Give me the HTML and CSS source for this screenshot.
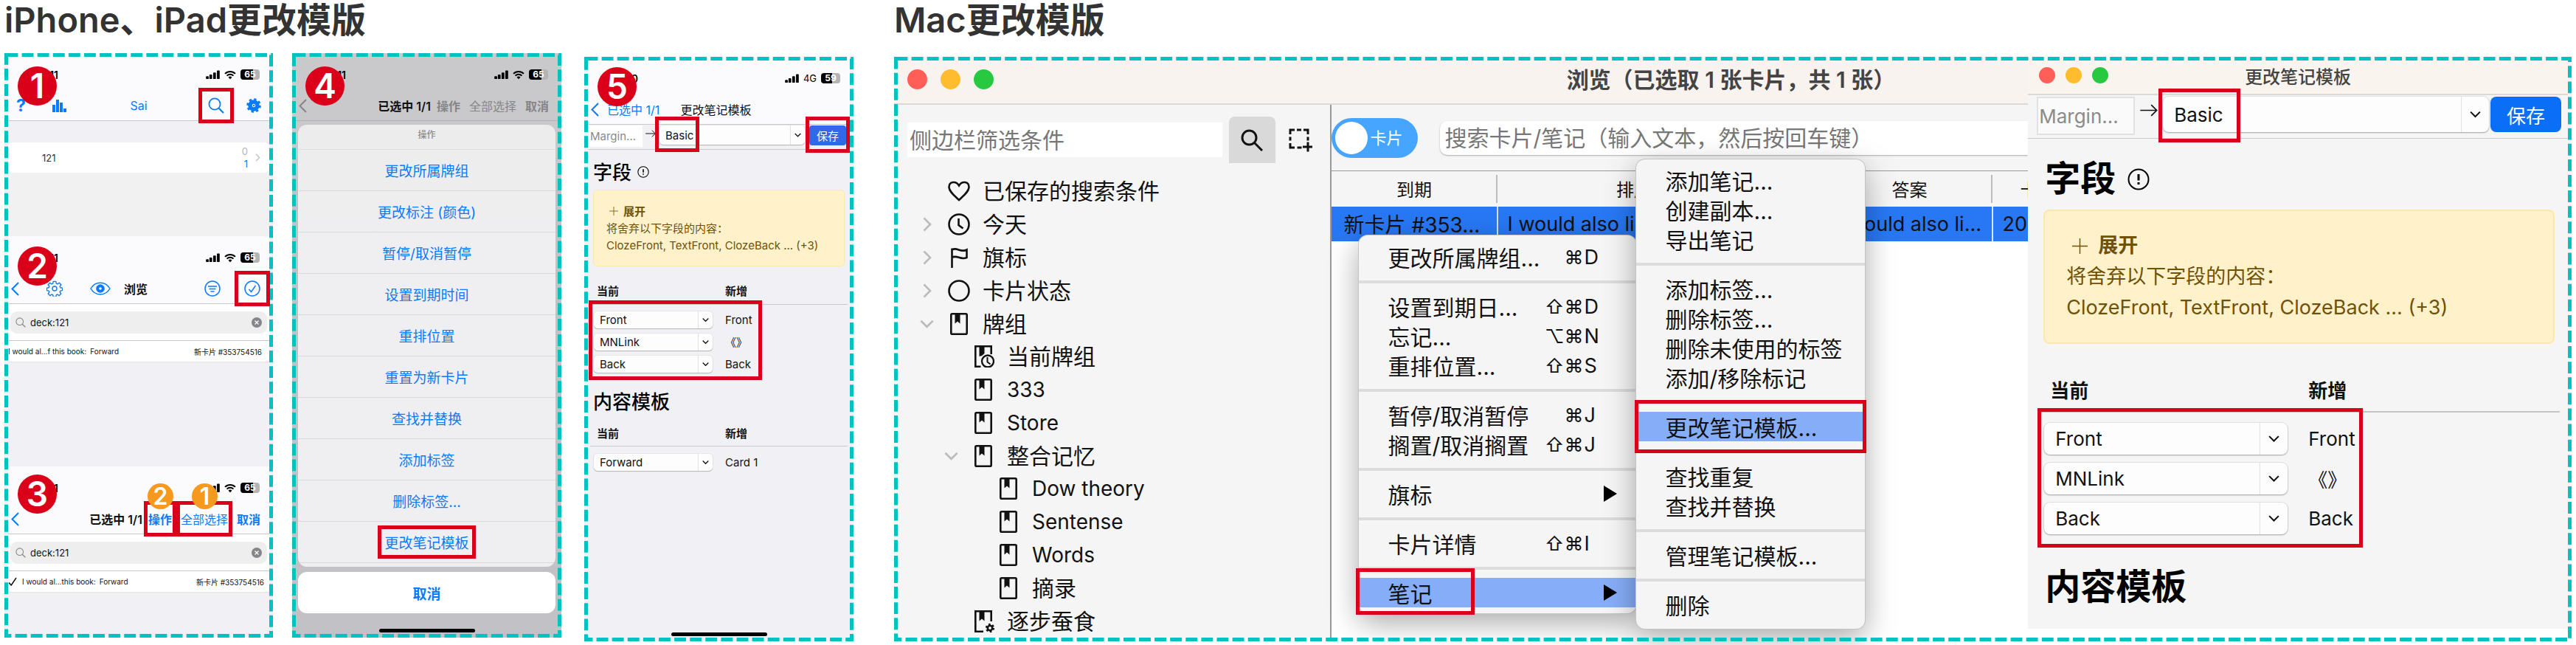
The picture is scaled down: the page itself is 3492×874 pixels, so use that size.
FILE: index.html
```html
<!DOCTYPE html>
<html lang="zh-CN">
<head>
<meta charset="utf-8">
<title>更改模版</title>
<link rel="stylesheet" href="styles.css">
</head>
<body>
<svg class="sprite" aria-hidden="true">
  <symbol id="signal" viewBox="0 0 20 14"><g fill="currentColor"><rect x="0" y="9" width="4" height="4" rx="1"/><rect x="5" y="6.5" width="4" height="6.500" rx="1"/><rect x="10.500" y="3.500" width="4" height="9.500" rx="1"/><rect x="16" y="0.500" width="4" height="12.500" rx="1"/></g></symbol>
  <symbol id="wifi" viewBox="0 0 18 14"><g fill="none" stroke="currentColor" stroke-width="2.300"><path d="M1.200 5.200a11 11 0 0 1 15.600 0"/><path d="M4 8.300a7 7 0 0 1 10 0"/></g><path d="M9 13.500 6.200 10.600a4 4 0 0 1 5.600 0z" fill="currentColor"/></symbol>
  <symbol id="chart" viewBox="0 0 19 17"><path fill="currentColor" d="M0 7h4v10H0zM5 0h4v17H5zM10 4h4v13h-4zM15 12h4v5h-4z"/></symbol>
  <symbol id="search" viewBox="0 0 22 22"><g fill="none" stroke="currentColor"><circle cx="9" cy="9" r="7.600" stroke-width="1.700"/><path d="m14.500 14.500 6.500 6.500" stroke-width="2.200"/></g></symbol>
  <symbol id="gear" viewBox="0 0 20 20"><g fill="none" stroke="currentColor"><circle cx="10" cy="10" r="5" stroke-width="5.500"/><circle cx="10" cy="10" r="8.300" stroke-width="3" stroke-dasharray="3.260 3.260"/></g><circle cx="10" cy="10" r="1.200" fill="currentColor"/></symbol>
  <symbol id="gear-line" viewBox="0 0 24 24"><g fill="none" stroke="currentColor" stroke-width="1.500" stroke-linejoin="round"><circle cx="12" cy="12" r="3.300"/><path d="M10 1.500h4l.5 3 1.800.8 2.500-1.800 2.800 2.800-1.800 2.500.7 1.800 3 .5v3.800l-3 .5-.7 1.800 1.800 2.500-2.800 2.800-2.500-1.800-1.800.8-.5 3h-4l-.5-3-1.800-.8-2.500 1.800-2.800-2.800 1.800-2.500-.7-1.800-3-.5v-3.800l3-.5.7-1.800-1.800-2.500 2.800-2.800 2.500 1.800 1.800-.8z"/></g></symbol>
  <symbol id="eye" viewBox="0 0 28 18"><path d="M1 9c6-10.500 20-10.500 26 0-6 10.500-20 10.500-26 0z" fill="none" stroke="currentColor" stroke-width="1.500"/><circle cx="14" cy="9" r="3.800" fill="none" stroke="currentColor" stroke-width="4"/></symbol>
  <symbol id="filter" viewBox="0 0 22 22"><g fill="none" stroke="currentColor" stroke-width="1.500"><circle cx="11" cy="11" r="10"/><path d="M5 8h12M6.500 11.500h9M8.500 15h5"/></g></symbol>
  <symbol id="check-circle" viewBox="0 0 22 22"><g fill="none" stroke="currentColor" stroke-width="1.500"><circle cx="11" cy="11" r="10"/><path d="m6.500 12 3 3.500L15.500 7"/></g></symbol>
  <symbol id="back" viewBox="0 0 11 19"><path d="M10 1 1.500 9.500 10 18" fill="none" stroke="currentColor" stroke-width="2"/></symbol>
  <symbol id="clear" viewBox="0 0 14 14"><circle cx="7" cy="7" r="7" fill="#85858a"/><path d="m4.500 4.500 5 5m0-5-5 5" stroke="#fff" stroke-width="1.300"/></symbol>
  <symbol id="tick" viewBox="0 0 12 12"><path d="m1 7.500 3.200 3.500L11 1" fill="none" stroke="currentColor" stroke-width="1.500"/></symbol>
  <symbol id="right" viewBox="0 0 12 20"><path d="m1.500 1.500 8.500 8.500-8.500 8.500" fill="none" stroke="currentColor" stroke-width="2.600"/></symbol>
  <symbol id="down" viewBox="0 0 20 12"><path d="m1.500 1.500 8.500 8.500 8.500-8.500" fill="none" stroke="currentColor" stroke-width="2.800"/></symbol>
  <symbol id="to" viewBox="0 0 22 16"><path d="M0 8h20M14 1l7 7-7 7" fill="none" stroke="currentColor" stroke-width="1.600"/></symbol>
  <symbol id="info" viewBox="0 0 30 30"><circle cx="15" cy="15" r="13.500" fill="none" stroke="currentColor" stroke-width="2"/><path d="M15 8v8.500M15 19v3" stroke="currentColor" stroke-width="3"/></symbol>
  <symbol id="plus" viewBox="0 0 22 22"><path d="M11 0v22M0 11h22" stroke="currentColor" stroke-width="1.500"/></symbol>
  <symbol id="find" viewBox="0 0 30 30"><g fill="none" stroke="currentColor" stroke-width="3"><circle cx="11.500" cy="11.500" r="9.500"/><path d="m18.500 18.500 10.500 10.500"/></g></symbol>
  <symbol id="select-add" viewBox="0 0 32 32"><path d="M2 8V2h6M11 2h6M20 2h6v6M2 11.500v5M26 11.500v5M2 20v6h6M11.500 26h6" fill="none" stroke="currentColor" stroke-width="3"/><path d="M26 18.500v13M19 25h13" stroke="currentColor" stroke-width="3"/></symbol>
  <symbol id="heart" viewBox="0 0 30 30"><path d="M15 27C10 22 1.500 16 1.500 9.500 1.500 2 11 .5 15 7.500 19 .5 28.500 2 28.500 9.500 28.500 16 20 22 15 27z" fill="none" stroke="currentColor" stroke-width="2.600"/></symbol>
  <symbol id="clock" viewBox="0 0 30 30"><g fill="none" stroke="currentColor" stroke-width="2.600"><circle cx="15" cy="15" r="13.500"/><path d="M14.500 7v9l6 4.500"/></g></symbol>
  <symbol id="flag" viewBox="0 0 30 30"><path d="M5.500 29V2.500M5.500 4.500C12 0 17 9 25.500 4.500v10.500C17 19 12 10.500 5.500 15" fill="none" stroke="currentColor" stroke-width="2.600"/></symbol>
  <symbol id="ring" viewBox="0 0 30 30"><circle cx="15" cy="15" r="13.500" fill="none" stroke="currentColor" stroke-width="2.600"/></symbol>
  <symbol id="deck" viewBox="0 0 30 30"><rect x="4.300" y="1.300" width="21.400" height="27.400" rx="1.500" fill="none" stroke="currentColor" stroke-width="2.600"/><path d="M9.500 2h7v12.500L13 11.500l-3.500 3z" fill="currentColor"/></symbol>
  <symbol id="deck-now" viewBox="0 0 30 30"><path d="M11.500 28.700H4.300V1.300h21.400V12" fill="none" stroke="currentColor" stroke-width="2.600"/><path d="M9.500 2h7v9L13 14l-3.500 1z" fill="currentColor"/><circle cx="21" cy="21.500" r="8" fill="none" stroke="currentColor" stroke-width="2.300"/><path d="M20.500 16v6.500l4 3" fill="none" stroke="currentColor" stroke-width="2"/></symbol>
  <symbol id="deck-gear" viewBox="0 0 30 30"><path d="M15 28.700H4.300V1.300h21.400V15" fill="none" stroke="currentColor" stroke-width="2.600"/><path d="M9.500 2h7v12.500L13 11.500l-3.500 3z" fill="currentColor"/><circle cx="24" cy="24" r="3.200" fill="none" stroke="currentColor" stroke-width="2.600"/><circle cx="24" cy="24" r="5" fill="none" stroke="currentColor" stroke-width="2.300" stroke-dasharray="2.618 2.618"/></symbol>
</svg>

<main class="page">
  <section class="group">
    <h1>iPhone、iPad更改模版</h1>
    <div class="phones">

      <article class="panel phone steps">
        <section class="screen screen-decks">
          <span class="badge badge-low">1</span>
          <header class="top">
            <div class="status"><time>11</time><span class="indicators"><svg class="i-signal"><use href="#signal"/></svg><svg class="i-wifi"><use href="#wifi"/></svg><span class="battery">65</span></span></div>
            <nav class="nav">
              <div class="side nav-wide"><button class="help" aria-label="帮助">?</button><button aria-label="统计"><svg class="i-chart"><use href="#chart"/></svg></button></div>
              <span class="user">Sai</span>
              <div class="side end end-near"><button class="marked mark-icon" aria-label="搜索"><svg class="i-22"><use href="#search"/></svg></button><button aria-label="设置"><svg class="i-20"><use href="#gear"/></svg></button></div>
            </nav>
          </header>
          <div class="deck-row"><span>121</span><span class="counts"><span>0</span><b>1</b></span><svg class="i-more"><use href="#right"/></svg></div>
        </section>

        <section class="screen screen-browse">
          <span class="badge">2</span>
          <header class="top">
            <div class="status"><time>11</time><span class="indicators"><svg class="i-signal"><use href="#signal"/></svg><svg class="i-wifi"><use href="#wifi"/></svg><span class="battery">65</span></span></div>
            <nav class="nav">
              <div class="side nav-tools"><button aria-label="返回"><svg class="i-back"><use href="#back"/></svg></button><button aria-label="设置"><svg class="i-22"><use href="#gear-line"/></svg></button><button aria-label="预览"><svg class="i-eye"><use href="#eye"/></svg></button></div>
              <strong>浏览</strong>
              <div class="side end"><button aria-label="筛选"><svg class="i-22"><use href="#filter"/></svg></button><button class="marked mark-icon" aria-label="选择"><svg class="i-22"><use href="#check-circle"/></svg></button></div>
            </nav>
          </header>
          <div class="search-wrap"><label class="search"><svg class="i-14"><use href="#search"/></svg><input type="text" value="deck:121" aria-label="搜索"><svg class="i-14 i-clear"><use href="#clear"/></svg></label></div>
          <div class="card-row"><span>I would al...f this book:</span><span>Forward</span><span class="due">新卡片 #353754516</span></div>
        </section>

        <section class="screen screen-select">
          <span class="badge badge-high">3</span>
          <header class="top">
            <div class="status"><time>11</time><span class="indicators"><svg class="i-signal"><use href="#signal"/></svg><svg class="i-wifi"><use href="#wifi"/></svg><span class="battery">65</span></span></div>
            <nav class="nav nav-select">
              <button class="first" aria-label="返回"><svg class="i-back"><use href="#back"/></svg></button>
              <strong>已选中 1/1</strong>
              <button class="strong marked mark-text">操作<span class="dot">2</span></button>
              <button class="marked mark-text">全部选择<span class="dot">1</span></button>
              <button class="strong">取消</button>
            </nav>
          </header>
          <div class="search-wrap"><label class="search"><svg class="i-14"><use href="#search"/></svg><input type="text" value="deck:121" aria-label="搜索"><svg class="i-14 i-clear"><use href="#clear"/></svg></label></div>
          <div class="card-row picked"><svg class="i-12"><use href="#tick"/></svg><span>I would al...this book:</span><span>Forward</span><span class="due">新卡片 #353754516</span></div>
        </section>
        <svg class="dashes" aria-hidden="true"><rect/></svg>
      </article>

      <article class="panel phone actions">
        <span class="badge badge-low">4</span>
        <header class="top">
          <div class="status"><time>11</time><span class="indicators"><svg class="i-signal"><use href="#signal"/></svg><svg class="i-wifi"><use href="#wifi"/></svg><span class="battery">65</span></span></div>
          <nav class="nav nav-select">
            <button class="first" aria-label="返回"><svg class="i-back"><use href="#back"/></svg></button>
            <strong>已选中 1/1</strong>
            <button class="strong">操作</button>
            <button>全部选择</button>
            <button class="strong">取消</button>
          </nav>
        </header>
        <div class="sheet">
          <h2>操作</h2>
          <button>更改所属牌组</button>
          <button>更改标注 (颜色)</button>
          <button>暂停/取消暂停</button>
          <button>设置到期时间</button>
          <button>重排位置</button>
          <button>重置为新卡片</button>
          <button>查找并替换</button>
          <button>添加标签</button>
          <button>删除标签...</button>
          <button><span class="marked mark-sheet">更改笔记模板</span></button>
        </div>
        <button class="cancel">取消</button>
        <div class="home"></div>
        <svg class="dashes" aria-hidden="true"><rect/></svg>
      </article>

      <article class="panel phone change low">
        <span class="badge">5</span>
        <header class="top">
          <div class="status"><time>0</time><span class="indicators"><svg class="i-signal"><use href="#signal"/></svg><span class="net">4G</span><span class="battery half">59</span></span></div>
          <nav class="nav">
            <div class="side nav-back"><button class="back-text"><svg class="i-back"><use href="#back"/></svg>已选中 1/1</button></div>
            <span>更改笔记模板</span>
            <div class="side end"></div>
          </nav>
        </header>
        <div class="template small">
          <div class="toolbar">
            <input class="old" type="text" value="Margin..." disabled aria-label="当前模板">
            <svg class="arrow"><use href="#to"/></svg>
            <div class="pick kind"><select aria-label="新模板"><option>Basic</option></select><svg><use href="#down"/></svg><span class="frame"></span></div>
            <button class="save marked mark-save">保存</button>
          </div>
          <div class="content">
            <h2>字段 <svg class="info"><use href="#info"/></svg></h2>
            <div class="alert"><b><svg><use href="#plus"/></svg>展开</b><span>将舍弃以下字段的内容：</span><span>ClozeFront, TextFront, ClozeBack ... (+3)</span></div>
            <table class="map boxed">
              <thead><tr><th>当前</th><th>新增</th></tr></thead>
              <tbody>
                <tr><td><div class="pick"><select aria-label="Front"><option>Front</option></select><svg><use href="#down"/></svg></div></td><td>Front</td></tr>
                <tr><td><div class="pick"><select aria-label="《》"><option>MNLink</option></select><svg><use href="#down"/></svg></div></td><td>《》</td></tr>
                <tr><td><div class="pick"><select aria-label="Back"><option>Back</option></select><svg><use href="#down"/></svg></div></td><td>Back</td></tr>
              </tbody>
            </table>
            <h2 class="second">内容模板</h2>
            <table class="map">
              <thead><tr><th>当前</th><th>新增</th></tr></thead>
              <tbody><tr><td><div class="pick"><select aria-label="Card 1"><option>Forward</option></select><svg><use href="#down"/></svg></div></td><td>Card 1</td></tr></tbody>
            </table>
          </div>
        </div>
        <div class="home"></div>
        <svg class="dashes" aria-hidden="true"><rect/></svg>
      </article>
    </div>
  </section>

  <section class="group">
    <h1>Mac更改模版</h1>
    <article class="panel mac low">
      <div class="window browser">
        <header class="titlebar"><span class="lights"><i></i><i></i><i></i></span><h2>浏览（已选取 1 张卡片，共 1 张）</h2></header>
        <div class="split">
          <aside class="sidebar">
            <div class="sidebar-top"><input type="text" placeholder="侧边栏筛选条件" aria-label="侧边栏筛选条件"><button class="find" aria-label="搜索"><svg class="i-30"><use href="#find"/></svg></button><button aria-label="选择"><svg class="i-32"><use href="#select-add"/></svg></button></div>
            <ul class="tree">
              <li><i></i><svg><use href="#heart"/></svg>已保存的搜索条件</li>
              <li><i><svg class="fold"><use href="#right"/></svg></i><svg><use href="#clock"/></svg>今天</li>
              <li><i><svg class="fold"><use href="#right"/></svg></i><svg><use href="#flag"/></svg>旗标</li>
              <li><i><svg class="fold"><use href="#right"/></svg></i><svg><use href="#ring"/></svg>卡片状态</li>
              <li><i><svg class="fold open"><use href="#down"/></svg></i><svg><use href="#deck"/></svg>牌组</li>
              <li class="l2"><i></i><svg><use href="#deck-now"/></svg>当前牌组</li>
              <li class="l2 latin"><i></i><svg><use href="#deck"/></svg>333</li>
              <li class="l2 latin"><i></i><svg><use href="#deck"/></svg>Store</li>
              <li class="l2"><i><svg class="fold open"><use href="#down"/></svg></i><svg><use href="#deck"/></svg>整合记忆</li>
              <li class="l3 latin"><i></i><svg><use href="#deck"/></svg>Dow theory</li>
              <li class="l3 latin"><i></i><svg><use href="#deck"/></svg>Sentense</li>
              <li class="l3 latin"><i></i><svg><use href="#deck"/></svg>Words</li>
              <li class="l3"><i></i><svg><use href="#deck"/></svg>摘录</li>
              <li class="l2"><i></i><svg><use href="#deck-gear"/></svg>逐步蚕食</li>
            </ul>
          </aside>
          <div class="cards">
            <div class="cards-top">
              <label class="toggle"><input type="checkbox"><span>卡片</span></label>
              <input class="query" type="text" placeholder="搜索卡片/笔记（输入文本，然后按回车键）" aria-label="搜索卡片/笔记">
            </div>
            <table class="list">
              <colgroup><col class="c1"><col class="c2"><col class="c3"><col></colgroup>
              <thead><tr><th>到期</th><th class="sort">排序字段</th><th>答案</th><th class="cut">卡</th></tr></thead>
              <tbody><tr><td>新卡片 #353...</td><td>I would also like</td><td>I would also li…</td><td>20</td></tr></tbody>
            </table>

            <div class="menu menu-card">
              <button>更改所属牌组...<span class="mod">⌘</span><span class="key">D</span></button>
              <hr>
              <button>设置到期日...<span class="mod">⇧⌘</span><span class="key">D</span></button>
              <button>忘记...<span class="mod">⌥⌘</span><span class="key">N</span></button>
              <button>重排位置...<span class="mod">⇧⌘</span><span class="key">S</span></button>
              <hr>
              <button>暂停/取消暂停<span class="mod">⌘</span><span class="key">J</span></button>
              <button>搁置/取消搁置<span class="mod">⇧⌘</span><span class="key">J</span></button>
              <hr>
              <button>旗标<span class="sub"></span></button>
              <hr>
              <button>卡片详情<span class="mod">⇧⌘</span><span class="key">I</span></button>
              <hr>
              <button class="active">笔记<span class="sub"></span><span class="frame"></span></button>
            </div>
            <div class="menu menu-note">
              <button>添加笔记...</button>
              <button>创建副本...</button>
              <button>导出笔记</button>
              <hr>
              <button>添加标签...</button>
              <button>删除标签...</button>
              <button>删除未使用的标签</button>
              <button>添加/移除标记</button>
              <hr>
              <button class="active">更改笔记模板...<span class="frame"></span></button>
              <hr>
              <button>查找重复</button>
              <button>查找并替换</button>
              <hr>
              <button>管理笔记模板...</button>
              <hr>
              <button>删除</button>
            </div>
          </div>
        </div>
      </div>

      <div class="window dialog">
        <header class="titlebar"><span class="lights"><i></i><i></i><i></i></span><h2>更改笔记模板</h2></header>
        <div class="template large">
          <div class="toolbar">
            <input class="old" type="text" value="Margin..." disabled aria-label="当前模板">
            <svg class="arrow"><use href="#to"/></svg>
            <div class="pick kind"><select aria-label="新模板"><option>Basic</option></select><svg><use href="#down"/></svg><span class="frame"></span></div>
            <button class="save">保存</button>
          </div>
          <div class="content">
            <h2>字段 <svg class="info"><use href="#info"/></svg></h2>
            <div class="alert"><b><svg><use href="#plus"/></svg>展开</b><span>将舍弃以下字段的内容：</span><span>ClozeFront, TextFront, ClozeBack ... (+3)</span></div>
            <table class="map boxed">
              <thead><tr><th>当前</th><th>新增</th></tr></thead>
              <tbody>
                <tr><td><div class="pick"><select aria-label="Front"><option>Front</option></select><svg><use href="#down"/></svg></div></td><td>Front</td></tr>
                <tr><td><div class="pick"><select aria-label="《》"><option>MNLink</option></select><svg><use href="#down"/></svg></div></td><td>《》</td></tr>
                <tr><td><div class="pick"><select aria-label="Back"><option>Back</option></select><svg><use href="#down"/></svg></div></td><td>Back</td></tr>
              </tbody>
            </table>
            <h2 class="second">内容模板</h2>
          </div>
        </div>
      </div>
      <svg class="dashes" aria-hidden="true"><rect/></svg>
    </article>
  </section>
</main>
</body>
</html>
```
FILE: styles.css
```css
:root {
  --red: #db0019;
  --teal: #00c2c1;
  --blue: #0a7aff;
  --line: #c9c9cc;
}

*, *::before, *::after { box-sizing: border-box; }

body {
  margin: 0;
  background: #fff;
  color: #111;
  font-family: Inter, "Noto Sans CJK SC", sans-serif;
}

button, input, select { font: inherit; color: inherit; margin: 0; border: 0; }
button { background: none; padding: 0; white-space: nowrap; }
svg { display: block; flex: none; }
h1, h2 { margin: 0; }
.sprite { position: absolute; width: 0; height: 0; }

/* Page */
.page {
  display: grid;
  grid-template-columns: minmax(0, 1151fr) minmax(0, 2274fr);
  gap: 55px;
  min-height: 100vh;
  padding: 0 6px 5px;
}
.group { display: flex; flex-direction: column; }
h1 { height: 72px; line-height: 54px; font-size: 47px; font-weight: 600; color: #333; white-space: nowrap; }
.phones {
  flex: 1;
  display: grid;
  grid-template-columns: minmax(0, 364fr) minmax(0, 365fr) minmax(0, 370fr);
  gap: 26px;
}
.panel { position: relative; margin-bottom: 5px; background: #f1f1f5; }
.panel.low { margin: 5px 0 0; }
.phone.low { margin-left: 5px; }
.dashes { position: absolute; inset: 0; width: 100%; height: 100%; pointer-events: none; z-index: 2; }
.dashes rect {
  x: 2.5px; y: 2.5px;
  width: calc(100% - 5px); height: calc(100% - 5px);
  fill: none; stroke: var(--teal); stroke-width: 5px; stroke-dasharray: 15.9 5.2;
}

/* Annotations */
.badge {
  position: absolute; z-index: 3; left: 18px; top: 14px;
  width: 53px; height: 53px; border-radius: 50%;
  background: var(--red); color: #fff;
  font-size: 46px; font-weight: 600; line-height: 53px; text-align: center;
}
.badge-low { top: 18px; }
.badge-high { top: 11px; }
.screen .badge { left: 13px; }
.marked { position: relative; }
.marked::after, .frame { content: ""; position: absolute; z-index: 3; border: 5px solid var(--red); pointer-events: none; }
.mark-icon::after { inset: -13px; }
.mark-text::after { inset: -12px -6px; }
.mark-sheet::after { inset: -9px; }
.mark-save::after { inset: -12px -5px -10px; }
.dot {
  position: absolute; z-index: 4; left: 50%; top: -36px; margin-left: -17px;
  width: 35px; height: 35px; border-radius: 50%;
  background: #f7991f; color: #fff;
  font-size: 32px; font-weight: 600; line-height: 35px; text-align: center;
}

/* Phone chrome */
.phone { display: flex; flex-direction: column; padding: 0 5px; }
.screen { position: relative; }
.screen-decks { flex: 248 1 0; background: #f1f1f1; }
.screen-browse { flex: 312 1 0; }
.screen-select { flex: 232 1 0; }
.top { height: 92px; background: #fbfbfd; border-bottom: 1px solid var(--line); font-size: 16px; }
.status { display: flex; justify-content: space-between; align-items: center; height: 50px; padding: 8px 13px 0 50px; color: #000; }
time { width: 18px; font-size: 14px; font-weight: 600; text-align: right; }
.indicators { display: flex; align-items: center; gap: 6px; }
.i-signal { width: 19px; height: 13px; }
.i-wifi { width: 16px; height: 13px; }
.net { font-size: 13px; }
.battery {
  width: 26px; height: 14px; border-radius: 4px;
  background: linear-gradient(90deg, #000 65%, #b4b4b4 65%);
  color: #fff; font-size: 12px; font-weight: 700; line-height: 14px; text-align: center;
}
.battery.half { background: linear-gradient(90deg, #000 59%, #b4b4b4 59%); }
.nav { display: flex; align-items: center; height: 42px; }
.nav button { color: var(--blue); }
.nav strong, .strong { font-weight: 600; }
.side { flex: 1 1 0; display: flex; align-items: center; }
.end { justify-content: flex-end; gap: 32px; padding-right: 12px; }
.end-near { gap: 30px; padding-right: 11px; }
.nav-wide { gap: 36px; padding-left: 11px; }
.nav-tools { gap: 37px; padding-left: 4px; }
.nav-back { padding-left: 4px; }
.back-text { display: flex; align-items: center; gap: 11px; }
.help { font-size: 23px; font-weight: 700; line-height: 24px; }
.user { color: var(--blue); }
.nav-select { padding: 0 12px 0 4px; gap: 12px; }
.nav-select .first { margin-right: auto; }
.nav-select strong { margin-right: -4px; }
.i-chart { width: 19px; height: 17px; }
.i-back { width: 11px; height: 19px; }
.i-eye { width: 28px; height: 18px; }
.i-22 { width: 22px; height: 22px; }
.i-20 { width: 20px; height: 20px; }
.i-14 { width: 14px; height: 14px; color: #8a8a8e; }
.i-12 { width: 12px; height: 12px; }
.i-more { width: 7px; height: 11px; color: #c4c4c6; }

.deck-row {
  display: flex; align-items: center; gap: 10px;
  height: 41px; margin-top: 29px; padding: 0 12px 0 46px;
  border-radius: 6px; background: #fff; font-size: 13px; color: #333;
}
.screen-decks::before { content: ""; position: absolute; left: 0; right: 0; top: 92px; height: 29px; background: #f1f1f5; }
.counts { margin-left: auto; display: grid; line-height: 17px; text-align: right; color: #b5b5b8; }
.counts b { font-weight: 400; color: var(--blue); }
.search-wrap { padding: 10px 3px 9px; background: #fff; border-bottom: 1px solid var(--line); }
.search { display: flex; align-items: center; gap: 6px; height: 30px; padding: 0 7px; border-radius: 9px; background: #eee; font-size: 13px; }
.search input { flex: 1; min-width: 0; padding: 0; background: none; }
.card-row { display: flex; align-items: center; gap: 5px; height: 29px; padding-right: 10px; background: #fff; border-bottom: 1px solid #e4e4e6; font-size: 10px; white-space: nowrap; }
.picked { padding-right: 7px; }
.picked svg { margin-right: 2px; }
.due { margin-left: auto; }

/* Action sheet */
.actions { background: linear-gradient(#c9c9cb 142px, #bdbdc2 142px, #bdbdc2 143px, #c8c8cc 143px, #c8c8cc 171px, #c1c1c6 171px); }
.actions .top { background: none; border-color: #b2b2b6; }
.actions .nav button { color: #858589; }
.sheet { margin: 5px 3px 7px; border-radius: 12px; background: linear-gradient(#ececec, #efeff1 30%); overflow: hidden; padding-bottom: 5px; }
.sheet h2 { height: 34px; padding-top: 3px; border-bottom: 1px solid #dcdcde; font-size: 12px; font-weight: 500; line-height: 21px; text-align: center; color: #8b8b8e; }
.sheet button { display: block; width: 100%; height: 56px; border-bottom: 1px solid #d9d9dc; font-size: 19px; color: var(--blue); }
.sheet button span { display: inline-block; }
.cancel { margin: 0 3px; height: 56px; border-radius: 12px; background: #fff; font-size: 19px; font-weight: 600; color: var(--blue); }
.home { width: 130px; height: 5px; margin: auto auto 7px; border-radius: 3px; background: #000; }

/* Template form, shared by the phone screen and the dialog */
.toolbar { display: flex; border-bottom: 1px solid var(--line); }
.old { background: #fff; color: #8b8b8b; }
.old:disabled { opacity: 1; }
.pick { position: relative; background: #fdfdfd; border-radius: 5px; box-shadow: 0 1px 1px #b5b5b5, 0 0 0 1px #e6e6e8; }
.pick select { width: 100%; height: 100%; background: none; appearance: none; }
.pick > svg { position: absolute; top: 0; right: 0; height: 100%; border-left: 1px solid #e2e2e2; pointer-events: none; }
.save { color: #fff; }
.content h2 { display: flex; align-items: center; font-weight: 600; color: #000; }
.alert { display: flex; flex-direction: column; background: #fff1ca; border: 1px solid #fde7ac; border-radius: 5px; color: #6f5208; white-space: nowrap; }
.alert b { display: flex; align-items: center; font-weight: 600; }
.map { position: relative; width: 100%; border-collapse: collapse; }
.map th { text-align: left; font-weight: 600; padding: 0; border-bottom: 1px solid var(--line); }
.map td { padding: 0; }
.boxed::after { content: ""; position: absolute; border: 5px solid var(--red); pointer-events: none; }

.small { font-size: 15px; }
.small .toolbar { height: 35px; padding: 2px 5px 0 1px; margin-top: -1px; }
.small .old { width: 73px; height: 29px; padding: 0 2px; }
.small .arrow { width: 14px; height: 10px; margin: 6px 5px 0 4px; }
.small .kind { flex: 1; height: 26px; margin-right: 6px; }
.small .kind .frame { left: -6px; top: -12px; width: 60px; height: 48px; }
.small .pick select { padding: 0 8px; }
.small .pick > svg { width: 20px; padding: 0 5px; }
.small .save { width: 50px; height: 27px; border-radius: 4px; background: #2f68e8; }
.small .content { padding: 10px 3px 0; }
.small h2 { height: 36px; padding-left: 4px; font-size: 26px; font-weight: 500; gap: 8px; }
.small .info { width: 16px; height: 16px; margin-top: 4px; }
.small .alert { height: 104px; margin: 8px 4px 0; padding: 0 17px; justify-content: center; line-height: 23px; }
.small .alert b svg { width: 12px; height: 12px; margin: 0 7px 0 4px; }
.small .map { margin-top: 15px; }
.small th { height: 36px; }
.small th:first-child { width: 183px; padding-left: 9px; }
.small td { height: 30px; }
.small td:first-child { padding: 0 17px 0 5px; }
.small td .pick { height: 23px; }
.small tbody::before { content: ""; display: block; height: 6px; }
.small .boxed::after { left: -2px; top: 31px; width: 235px; height: 108px; }
.small .second { margin-top: 16px; }
.small .second + .map { margin-top: 8px; }

.large { font-size: 26px; }
.large .toolbar { height: 59px; padding: 2px 9px 0 12px; }
.large .old { width: 133px; height: 52px; padding: 0 1px; border: 2px solid #e2e2e2; background: #fafafa; }
.large .arrow { width: 24px; height: 17px; margin: 10px 7px 0; }
.large .kind { flex: 1; height: 48px; margin-right: 2px; }
.large .kind .frame { left: -6px; top: -11px; width: 111px; height: 73px; }
.large .pick { border-radius: 8px; box-shadow: 0 1px 2px #a5a5a5, 0 0 0 1px #e3e3e3; }
.large .pick select { padding: 0 15px; }
.large .pick > svg { width: 38px; padding: 0 11px; }
.large .save { width: 96px; height: 48px; border-radius: 8px; background: #0b6ef6; }
.large .content { padding: 20px 11px 0 15px; }
.large h2 { height: 60px; padding-left: 8px; font-size: 48px; gap: 16px; }
.large .info { width: 30px; height: 30px; margin-top: 10px; }
.large .alert { height: 182px; margin: 16px 7px 0 6px; padding: 0 29px; justify-content: center; line-height: 42px; font-size: 27px; border-width: 2px; border-radius: 8px; }
.large .alert b { font-size: 27px; }
.large .alert b svg { width: 21px; height: 21px; margin: 0 14px 0 8px; }
.large .map { margin-top: 31px; }
.large th { height: 61px; border-bottom: 2px solid #c4c4c4; }
.large th:first-child { width: 365px; padding-left: 15px; }
.large td { height: 54px; }
.large td:first-child { padding: 0 28px 0 7px; }
.large td .pick { height: 43px; }
.large tbody::before { content: ""; display: block; height: 8px; }
.large .boxed::after { left: -2px; top: 56px; width: 441px; height: 189px; }
.large .second { margin-top: 32px; }

/* Mac windows */
.mac { flex: 1; display: flex; padding: 0 0 5px; font-size: 30px; background: #fff; }
.window { display: flex; flex-direction: column; min-width: 0; background: #f5f5f5; }
.browser { flex: 1539 1 0; padding-left: 5px; border-radius: 12px 0 0 0; }
.dialog { flex: 735 1 0; padding-right: 5px; margin-bottom: 12px; border-radius: 12px 12px 0 0; z-index: 1; }
.titlebar { display: flex; align-items: center; background: #f9f3f0; border-bottom: 2px solid #ddd8d6; color: #444; }
.titlebar h2 { font-weight: 600; white-space: nowrap; }
.lights { display: flex; }
.lights i { border-radius: 50%; background: #ff5f57; }
.lights i:nth-child(2) { background: #febc2e; }
.lights i:nth-child(3) { background: #28c840; }
.browser .titlebar { height: 65px; justify-content: space-between; margin-left: -5px; padding: 0 180px 2px 18px; border-radius: 12px 0 0 0; }
.browser .titlebar h2 { font-size: 30px; line-height: 36px; }
.browser .lights { gap: 18px; }
.browser .lights i { width: 27px; height: 27px; }
.dialog .titlebar { height: 52px; padding: 0 15px; border-radius: 12px 12px 0 0; background: #faf4ee; }
.dialog .lights { gap: 14px; flex: 1 1 0; }
.dialog .lights i { width: 22px; height: 22px; }
.dialog .titlebar::after { content: ""; flex: 1 1 0; }
.dialog .titlebar h2 { font-size: 24px; font-weight: 500; }

.split { flex: 1; display: flex; min-height: 0; }
.sidebar { flex: 587 1 0; min-width: 0; display: flex; flex-direction: column; }
.sidebar-top { display: flex; align-items: center; padding: 16px 24px 16px 13px; }
.sidebar-top input { flex: 1; min-width: 0; height: 47px; padding: 0 3px; background: #fff; }
input::placeholder { color: #777; opacity: 1; }
.find { display: grid; place-items: center; flex: none; width: 63px; height: 63px; margin: 0 18px 0 9px; border-radius: 8px 8px 0 0; background: #d9d9d9; }
.i-30 { width: 30px; height: 30px; }
.i-32 { width: 32px; height: 32px; }
.tree { flex: 1; display: flex; flex-direction: column; margin: 0; padding: 0 0 0 28px; list-style: none; }
.tree li { flex: 1 1 0; display: flex; align-items: center; line-height: 40px; white-space: nowrap; }
.tree li > svg { width: 30px; height: 30px; margin-right: 17px; }
.tree li > i { display: grid; place-items: center; width: 23px; margin-right: 17px; color: #bbb; }
.fold { width: 12px; height: 20px; }
.fold.open { width: 19px; height: 12px; }
.tree .l2 { padding-left: 33px; }
.tree .l3 { padding-left: 67px; }
.latin { font-size: 28px; }

.cards { position: relative; flex: 947 1 0; min-width: 0; display: flex; flex-direction: column; background: #fff; border-left: 2px solid #999; }
.cards-top { display: flex; align-items: center; gap: 30px; height: 89px; background: #f5f5f5; }
.toggle { position: relative; flex: none; width: 117px; height: 54px; border-radius: 27px; background: #45a5ff; color: #fff; font-size: 22px; line-height: 54px; }
.toggle input { position: absolute; left: 5px; top: 5px; width: 44px; height: 44px; border-radius: 50%; background: #fff; appearance: none; }
.toggle span { margin-left: 53px; }
.query { flex: 1; min-width: 0; height: 46px; padding: 0 7px; border-radius: 10px 0 0 10px; background: #fff; box-shadow: 0 1px 2px #aaa; font-size: 30px; }
.list { width: 100%; table-layout: fixed; border-collapse: collapse; border-top: 1px solid #999; white-space: nowrap; }
.c1 { width: 225px; }
.c2 { width: 447px; }
.c3 { width: 224px; }
.list th { height: 48px; padding: 0; background: linear-gradient(#bdbdbd, #bdbdbd) right 0 top 5px / 2px 38px no-repeat #f5f5f5; font-size: 24px; font-weight: 400; overflow: hidden; }
.list th.sort { padding-right: 28px; }
.list th.cut { padding-left: 38px; text-align: left; background: #f5f5f5; }
.list td { height: 47px; padding: 0 0 0 13px; background: #2878f5; border-right: 2px solid #d5e3fb; font-size: 27px; overflow: hidden; }
.list td:first-child { padding-left: 17px; font-size: 28px; }
.list td:last-child { border: 0; }

.menu { position: absolute; padding: 8px 0; border-radius: 12px; background: #f5f5f5; box-shadow: 0 0 0 1px #c4c4c4, 0 12px 40px rgba(0, 0, 0, .35); }
.menu button { position: relative; display: flex; align-items: center; width: 100%; height: 40px; padding: 0 26px 0 40px; text-align: left; }
.menu hr { height: 4px; margin: 12px 0 11px; border: 0; background: #dcdcdc; }
.menu .active { background: #86adf8; }
.menu-card { left: 37px; top: 177px; width: 376px; padding-top: 9px; }
.menu-note { left: 413px; top: 74px; width: 310px; padding-bottom: 13px; }
.mod { margin-left: auto; font-size: 26px; }
.key { width: 45px; padding-left: 1px; font-size: 27px; }
.sub { margin-left: auto; border-left: 18px solid #000; border-top: 11px solid transparent; border-bottom: 11px solid transparent; }
.menu-card .frame { left: -4px; top: -13px; width: 161px; height: 63px; }
.menu-note .frame { inset: -16px -2px; }
```
